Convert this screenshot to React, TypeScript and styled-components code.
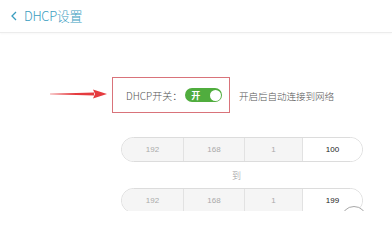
import React from "react";
import styled, { createGlobalStyle } from "styled-components";

const Global = createGlobalStyle`
  html, body { margin: 0; padding: 0; background: #fff; }
  body { width: 392px; height: 211px; overflow: hidden; font-family: "Noto Sans CJK SC", "Liberation Sans", sans-serif; }
  #root { position: relative; width: 392px; height: 211px; overflow: hidden; }
`;

const Header = styled.div`
  height: 32px;
  display: flex;
  align-items: center;
  padding-left: 10px;
  gap: 6px;
  border-bottom: 1px solid #ececec;
  box-shadow: 0 1px 2px rgba(0,0,0,0.03);
  color: #3a9dbf;
  font-size: 13px;
  font-weight: 300;
  letter-spacing: -0.3px;
`;

const Title = styled.span`
  line-height: 1;
  margin-top: -1px;
`;

const Main = styled.div`
  display: flex;
  flex-direction: column;
  padding-top: 44px;
`;

const SwitchRow = styled.div`
  display: flex;
  align-items: center;
  padding-left: 50px;
`;

const ArrowWrap = styled.div`
  width: 58px;
  height: 10px;
  margin-top: -2px;
  margin-right: 4px;
  display: flex;
`;

const HighlightBox = styled.div`
  width: 118px;
  height: 36px;
  border: 1px solid #d9737a;
  display: flex;
  align-items: center;
  padding-left: 13px;
  box-sizing: border-box;
  gap: 3px;
`;

const Label = styled.span`
  font-size: 10px;
  font-weight: 300;
  color: #555;
  margin-top: 1px;
`;

const Toggle = styled.div<{ $on: boolean }>`
  position: relative;
  width: 37px;
  height: 14px;
  border-radius: 7px;
  background: ${(p) => (p.$on ? "#50ad3e" : "#ccc")};
  display: flex;
  align-items: center;
  padding-left: 6px;
  box-sizing: border-box;
  color: #fff;
  font-size: 9px;
  font-weight: bold;
`;

const Knob = styled.span`
  position: absolute;
  right: 1.5px;
  top: 1.5px;
  width: 11px;
  height: 11px;
  border-radius: 50%;
  background: #fff;
`;

const Hint = styled.span`
  font-size: 9.6px;
  font-weight: 300;
  color: #555;
  margin-left: 9px;
  letter-spacing: -0.1px;
  margin-top: 1px;
`;

const IpBox = styled.div<{ $top: number }>`
  margin-left: 121px;
  margin-top: ${(p) => p.$top}px;
  width: 242px;
  height: 25px;
  border: 1px solid #dcdcdc;
  border-radius: 13px;
  box-sizing: border-box;
  display: flex;
  overflow: hidden;
`;

const Seg = styled.div<{ $w: number; $active?: boolean }>`
  width: ${(p) => p.$w}px;
  flex: none;
  display: flex;
  align-items: center;
  justify-content: center;
  background: ${(p) => (p.$active ? "#fff" : "#f5f5f5")};
  color: ${(p) => (p.$active ? "#222" : "#aaa")};
  font-family: "Liberation Sans", sans-serif;
  font-size: 8px;
  border-right: 1px solid #e2e2e2;
  &:last-child { border-right: none; flex: 1; }
`;

const To = styled.div`
  margin-top: 8px;
  margin-left: 232px;
  font-size: 9px;
  font-weight: 300;
  color: #999;
  line-height: 11px;
  height: 11px;
`;

const Floating = styled.div`
  position: absolute;
  left: 341px;
  top: 206px;
  width: 24px;
  height: 24px;
  border: 1.5px solid #a8a8a8;
  border-radius: 50%;
  background: #fff;
`;

const ips = [
  ["192", "168", "1", "100"],
  ["192", "168", "1", "199"],
];
const widths = [61, 60, 57, 64];

function IpInput({ parts, top }: { parts: string[]; top: number }) {
  return (
    <IpBox $top={top}>
      {parts.map((v, i) => (
        <Seg key={i} $w={widths[i]} $active={i === 3}>
          {v}
        </Seg>
      ))}
    </IpBox>
  );
}

export default function App() {
  return (
    <>
      <Global />
      <Header>
        <svg width="8" height="10" viewBox="0 0 8 10">
          <path d="M6 1 L2 5 L6 9" fill="none" stroke="#3a9dbf" strokeWidth="1.3" />
        </svg>
        <Title>DHCP设置</Title>
      </Header>
      <Main>
        <SwitchRow>
          <ArrowWrap>
            <svg width="58" height="10" viewBox="0 0 58 10">
              <path d="M0 4.7 L44 3.4 L44 6.6 L0 5.3 Z" fill="#e53b3f" />
              <path d="M43 0.5 L57 5 L43 9.5 L45 5 Z" fill="#e53b3f" />
            </svg>
          </ArrowWrap>
          <HighlightBox>
            <Label>DHCP开关：</Label>
            <Toggle $on>
              开
              <Knob />
            </Toggle>
          </HighlightBox>
          <Hint>开启后自动连接到网络</Hint>
        </SwitchRow>
        <IpInput parts={ips[0]} top={24} />
        <To>到</To>
        <IpInput parts={ips[1]} top={7} />
      </Main>
      <Floating />
    </>
  );
}
